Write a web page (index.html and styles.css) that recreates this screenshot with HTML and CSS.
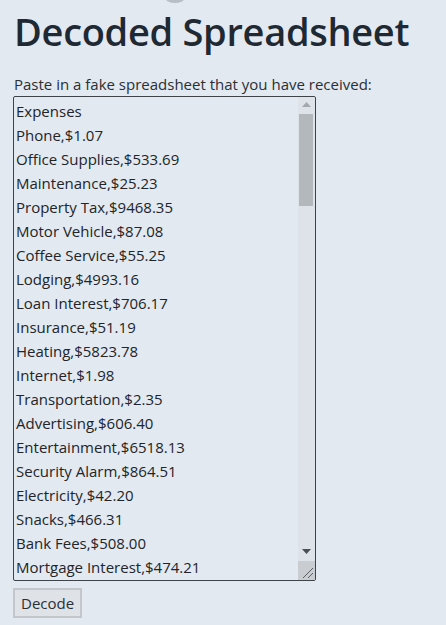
FILE: index.html
```html
<!DOCTYPE html>
<html lang="en">
<head>
<meta charset="utf-8">
<title>Decoded Spreadsheet</title>
<link rel="stylesheet" href="styles.css">
</head>
<body>
<div class="top-mark"></div>
<main class="page">
  <h1 class="title">Decoded Spreadsheet</h1>
  <label class="label" for="sheet">Paste in a fake spreadsheet that you have received:</label>
  <div class="sheet-wrap">
    <textarea id="sheet" class="sheet" spellcheck="false">Expenses
Phone,$1.07
Office Supplies,$533.69
Maintenance,$25.23
Property Tax,$9468.35
Motor Vehicle,$87.08
Coffee Service,$55.25
Lodging,$4993.16
Loan Interest,$706.17
Insurance,$51.19
Heating,$5823.78
Internet,$1.98
Transportation,$2.35
Advertising,$606.40
Entertainment,$6518.13
Security Alarm,$864.51
Electricity,$42.20
Snacks,$466.31
Bank Fees,$508.00
Mortgage Interest,$474.21
Postage,$12.40
Cleaning,$310.55
Legal Fees,$1200.00
Software,$89.99
Travel,$2310.42
Meals,$145.67
Water,$38.12
Gas,$74.30
Repairs,$655.10
Printing,$22.85
Subscriptions,$48.00
Uniforms,$231.75
Training,$890.00
Parking,$16.50
Licenses,$310.00
Accounting,$750.25
Consulting,$3200.00
Furniture,$1498.99
Equipment,$2765.43
Shipping,$93.21
Marketing,$1850.60
Donations,$250.00
Rent,$4200.00
Waste Removal,$67.80
Landscaping,$180.00
Pest Control,$95.00
Bank Charges,$14.25
Cell Phones,$210.40
Web Hosting,$29.95
Domain Names,$15.99
Office Rent,$3100.00
Janitorial,$420.00
Courier,$55.70
Storage,$130.00
Dues,$75.00
Books,$44.60
Seminars,$600.00
Car Rental,$325.18
Fuel,$412.90
Tolls,$18.40
Lodging Tax,$63.22
Catering,$540.75
Gifts,$120.00
Security,$980.00
Payroll Fees,$145.00
Benefits,$3600.50
Pension,$1250.00
Workers Comp,$430.20
Sales Tax,$870.66
Hardware,$1699.00
Maintenance Plan,$240.00
Alarm Monitoring,$39.99
Signage,$315.00
Photography,$400.00
Translation,$275.50
Recruiting,$950.00
Background Checks,$60.00
Medical,$210.00
Interest Expense,$88.14
Late Fees,$35.00
Miscellaneous,$19.99</textarea>
    <div class="scrollbar" aria-hidden="true">
      <div class="sb-btn">
        <svg width="9" height="6" viewBox="0 0 9 6"><polygon points="0,5 4.5,0 9,5" fill="#a3a8ae"/></svg>
      </div>
      <div class="sb-track">
        <div class="sb-thumb"></div>
      </div>
      <div class="sb-btn">
        <svg width="9" height="6" viewBox="0 0 9 6"><polygon points="0,0 9,0 4.5,5" fill="#4b4f54"/></svg>
      </div>
      <div class="sb-corner">
        <svg width="17" height="19" viewBox="0 0 17 19"><line x1="5" y1="17" x2="15" y2="7" stroke="#5a5f65" stroke-width="1"/><line x1="10" y1="17" x2="15" y2="12" stroke="#5a5f65" stroke-width="1"/></svg>
      </div>
    </div>
  </div>
  <div class="actions">
    <button class="btn" type="button">Decode</button>
  </div>
</main>
</body>
</html>
```

FILE: styles.css
```css
html, body {
  margin: 0;
  padding: 0;
}

body {
  background: #e3e9f0;
  color: #212529;
  font-family: "Open Sans", "Noto Sans", "Liberation Sans", sans-serif;
  font-size: 15px;
  line-height: 1.5;
  height: 625px;
  position: relative;
  overflow: hidden;
}

.top-mark {
  position: absolute;
  left: 166px;
  top: -5px;
  width: 18px;
  height: 8px;
  border-radius: 50%;
  background: #9aa1a8;
  opacity: 0.6;
}

.page {
  padding: 0 13px;
  display: flex;
  flex-direction: column;
  align-items: flex-start;
}

.title {
  margin: 9px 0 19px 1px;
  font-size: 38px;
  font-weight: 600;
  line-height: 1.2;
  color: #1f2933;
  letter-spacing: -0.3px;
}

.label {
  display: block;
  margin: 0 0 2px 1px;
  line-height: 20px;
  color: #2a2f35;
}

.sheet-wrap {
  position: relative;
  width: 303px;
  height: 485px;
}

.sheet {
  display: block;
  box-sizing: border-box;
  width: 303px;
  height: 485px;
  margin: 0;
  padding: 2px 20px 2px 2px;
  border: 1px solid #3d4349;
  border-radius: 2px;
  background: transparent;
  color: #212529;
  font-family: inherit;
  font-size: 15px;
  line-height: 24px;
  resize: none;
  overflow-y: scroll;
  scrollbar-width: none;
  outline: none;
}

.scrollbar {
  position: absolute;
  top: 1px;
  right: 1px;
  bottom: 1px;
  width: 17px;
  display: flex;
  flex-direction: column;
  background: rgba(214, 220, 226, 0.45);
}

.sb-btn {
  height: 17px;
  flex: none;
  display: flex;
  align-items: center;
  justify-content: center;
}

.sb-track {
  flex: 1;
  padding: 0 2px 0 1px;
}

.sb-thumb {
  height: 92px;
  background: #b3b8bd;
}

.sb-corner {
  height: 19px;
  flex: none;
  background: #c9cdd2;
  display: flex;
}

.actions {
  padding-top: 7px;
}

.btn {
  box-sizing: border-box;
  height: 30px;
  width: 69px;
  padding: 0 6px;
  border: 2px solid #c3c7cc;
  border-radius: 0;
  background: #dfe3e8;
  color: #2a2f35;
  font-family: inherit;
  font-size: 15px;
  line-height: 24px;
}
```
